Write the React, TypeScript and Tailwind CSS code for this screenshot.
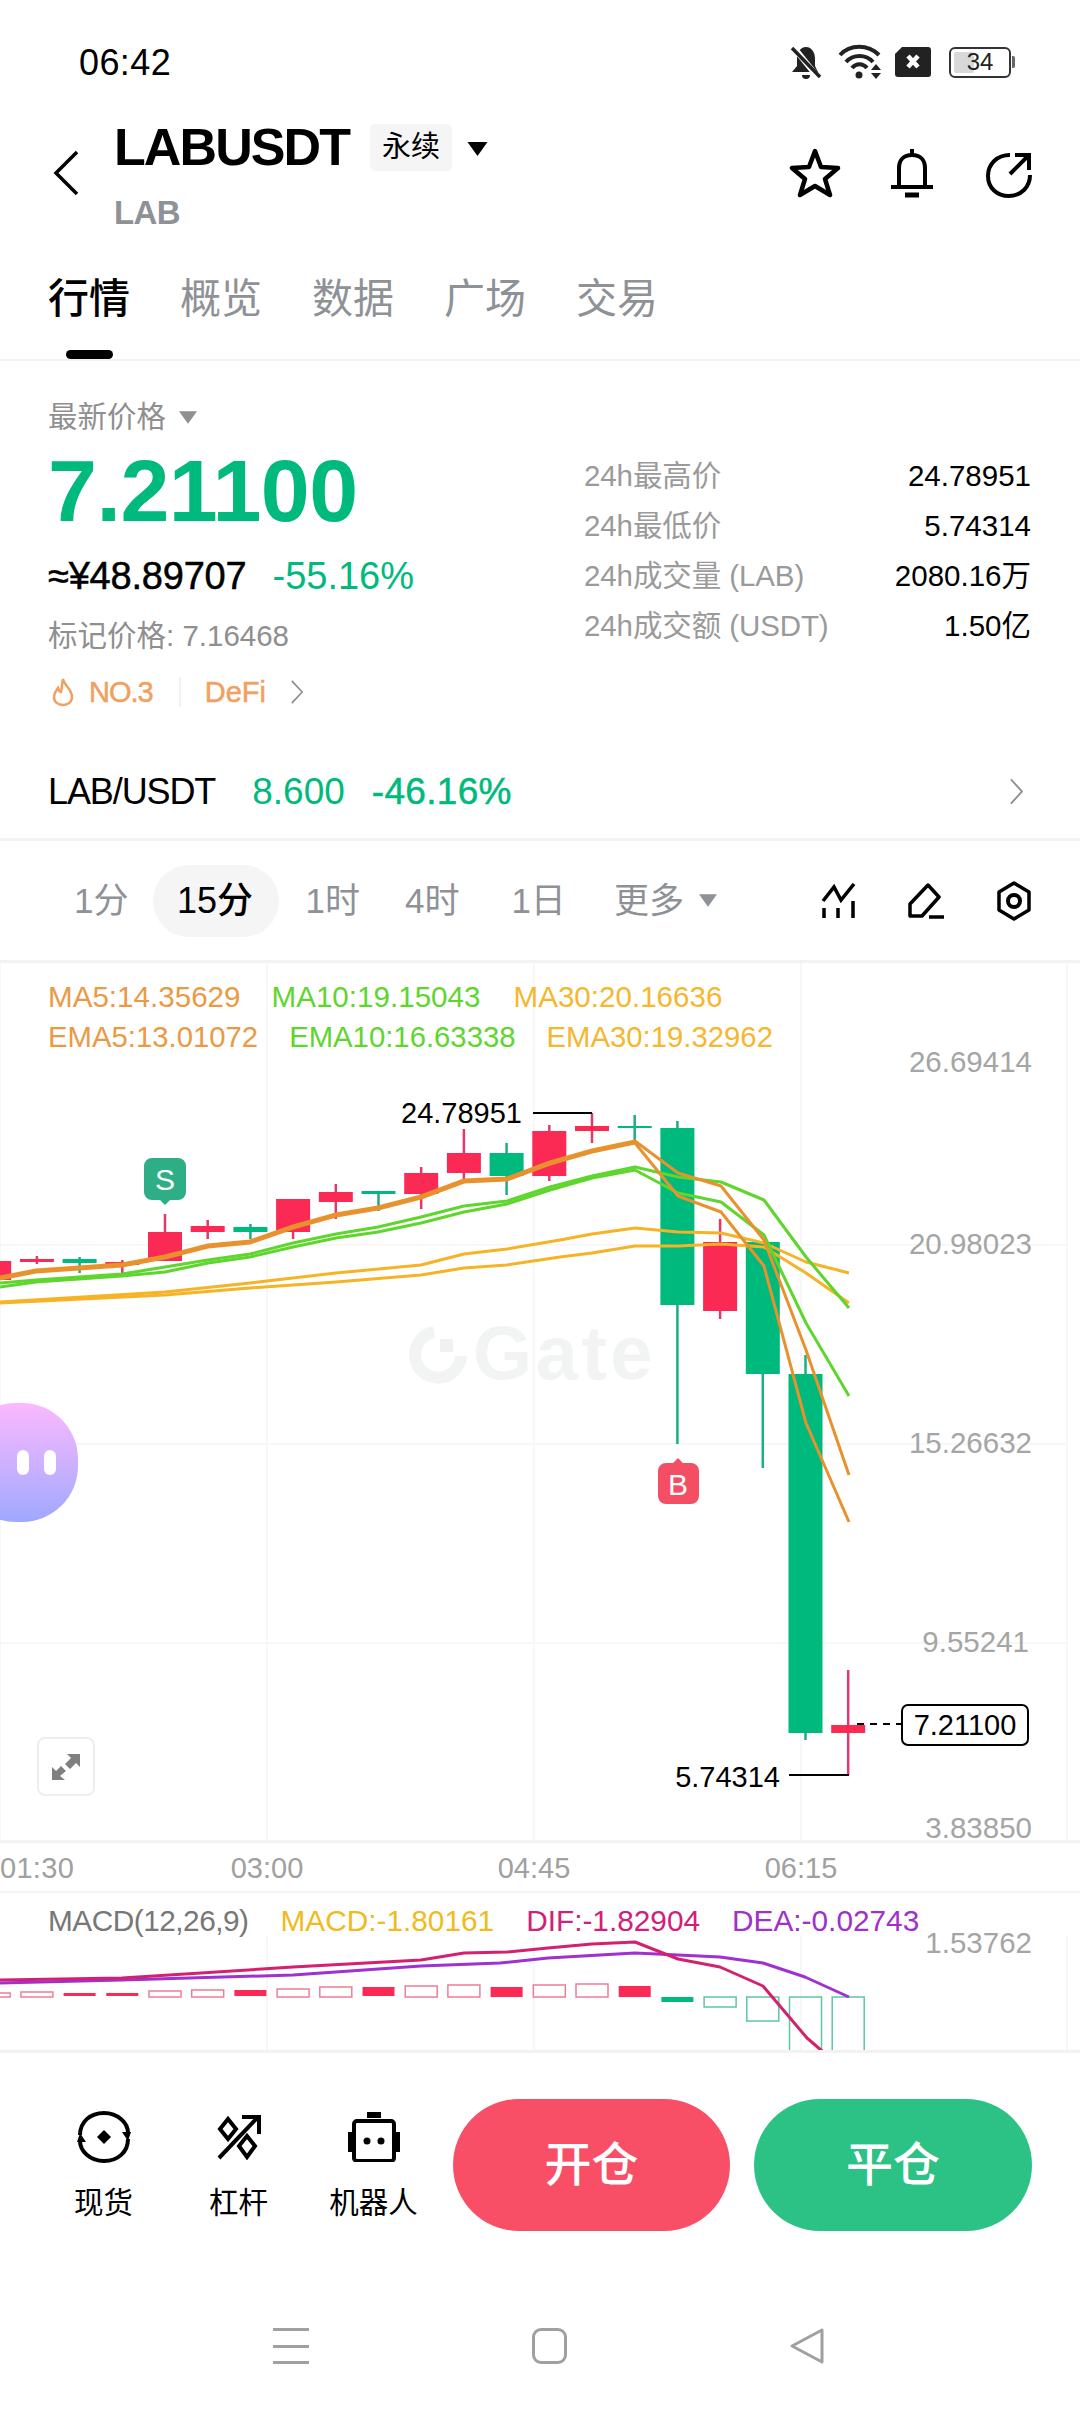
import React from "react";

const X = (i: number) => 165 + 42.7 * i;
const RED = "#fb2a55";
const GREEN = "#00b97c";

type C = [number, "r" | "g", number, number, number, number];
const candles: C[] = [
  [-4, "r", 1261, 1280, 1258, 1285],
  [-3, "r", 1259, 1262, 1256, 1264],
  [-2, "g", 1259, 1263, 1257, 1273],
  [-1, "r", 1262, 1265, 1260, 1273],
  [0, "r", 1232, 1261, 1214, 1261],
  [1, "r", 1226, 1232, 1220, 1239],
  [2, "g", 1227, 1232, 1224, 1239],
  [3, "r", 1199, 1232, 1199, 1239],
  [4, "r", 1192, 1202, 1184, 1219],
  [5, "g", 1191, 1194, 1191, 1211],
  [6, "r", 1173, 1194, 1167, 1209],
  [7, "r", 1153, 1173, 1129, 1181],
  [8, "g", 1153, 1176, 1143, 1195],
  [9, "r", 1131, 1176, 1125, 1181],
  [10, "r", 1126, 1131, 1113, 1143],
  [11, "g", 1126, 1128, 1115, 1140],
  [12, "g", 1128, 1305, 1121, 1444],
  [13, "r", 1242, 1311, 1219, 1319],
  [14, "g", 1242, 1374, 1242, 1468],
  [15, "g", 1374, 1733, 1355, 1740],
  [16, "r", 1725, 1733, 1670, 1775],
];

const pts = (a: number[][]) => a.map((p) => p.join(",")).join(" ");
const orangeBase = [[0, 1278], [36, 1271], [79, 1268], [122, 1265], [165, 1257], [208, 1246], [250, 1242], [293, 1227], [336, 1215], [378, 1208], [421, 1197], [464, 1181], [507, 1179], [550, 1163], [592, 1151], [635, 1142]];
const ema5 = [...orangeBase.map(([x, y]) => [x, y - 1]), [678, 1173], [721, 1186], [764, 1240], [806, 1350], [849, 1475]];
const ma5 = [...orangeBase.map(([x, y]) => [x, y + 1]), [678, 1196], [721, 1212], [764, 1266], [806, 1423], [849, 1522]];
const ma10 = [[0, 1283], [36, 1280], [79, 1277], [122, 1274], [165, 1267], [208, 1260], [250, 1254], [293, 1243], [336, 1234], [378, 1227], [421, 1217], [464, 1206], [507, 1201], [550, 1187], [592, 1176], [635, 1167], [678, 1177], [721, 1182], [764, 1200], [806, 1257], [849, 1308]];
const ema10 = [[0, 1287], [36, 1282], [79, 1279], [122, 1276], [165, 1272], [208, 1263], [250, 1257], [293, 1247], [336, 1238], [378, 1232], [421, 1223], [464, 1212], [507, 1204], [550, 1190], [592, 1178], [635, 1170], [678, 1193], [721, 1202], [764, 1235], [806, 1323], [849, 1396]];
const ma30 = [[0, 1302], [165, 1292], [250, 1283], [336, 1273], [421, 1265], [464, 1254], [507, 1249], [560, 1240], [592, 1234], [635, 1228], [678, 1232], [721, 1233], [764, 1243], [806, 1262], [849, 1273]];
const ema30 = [[0, 1303], [165, 1295], [250, 1288], [336, 1282], [421, 1275], [464, 1268], [507, 1265], [560, 1257], [592, 1253], [635, 1246], [678, 1246], [721, 1244], [764, 1247], [806, 1273], [849, 1303]];

const dif = [[0, 1980], [122, 1978], [293, 1967], [421, 1960], [464, 1953], [507, 1952], [548, 1948], [592, 1944], [635, 1942], [678, 1959], [720, 1967], [763, 1986], [807, 2038], [822, 2051]];
const dea = [[0, 1983], [122, 1980], [293, 1975], [421, 1966], [500, 1963], [548, 1958], [635, 1953], [678, 1955], [720, 1957], [763, 1963], [805, 1977], [849, 1997]];

type B = [number, number, number, "r" | "g", boolean];
const bars: B[] = [
  [-4, 1993, 1997, "r", false],
  [-3, 1992, 1997, "r", false],
  [-2, 1993, 1996, "r", true],
  [-1, 1993, 1996, "r", true],
  [0, 1991, 1997, "r", false],
  [1, 1990, 1997, "r", false],
  [2, 1990, 1996, "r", true],
  [3, 1989, 1997, "r", false],
  [4, 1987, 1997, "r", false],
  [5, 1987, 1996, "r", true],
  [6, 1986, 1997, "r", false],
  [7, 1985, 1997, "r", false],
  [8, 1987, 1997, "r", true],
  [9, 1985, 1997, "r", false],
  [10, 1984, 1997, "r", false],
  [11, 1986, 1997, "r", true],
  [12, 1997, 2002, "g", true],
  [13, 1997, 2007, "g", false],
  [14, 1997, 2021, "g", false],
  [15, 1997, 2052, "g", false],
  [16, 1997, 2052, "g", false],
];

function Tri({ cls }: { cls: string }) {
  return (
    <svg viewBox="0 0 20 14" className={cls}>
      <polygon points="0,0 20,0 10,14" fill="currentColor" />
    </svg>
  );
}

function Chevron({ cls }: { cls: string }) {
  return (
    <svg viewBox="0 0 14 28" className={cls} fill="none" stroke="currentColor" strokeWidth="2">
      <path d="M1 1 L13 14 L1 27" />
    </svg>
  );
}

function StatusBar() {
  return (
    <div className="h-[124px] flex items-center pl-[79px] pr-[65px] justify-between">
      <span className="text-[36px] text-black leading-none tracking-[0.4px] pt-[2px]">06:42</span>
      <div className="flex items-center">
        <svg width="32" height="36" viewBox="0 0 32 36" className="text-[#222]">
          <path d="M16 3 C10 3 7 9 7 15 L7 22 L2 28 L28 28 L25 22 L25 15 C25 9 22 3 16 3 Z" fill="currentColor" />
          <path d="M12 31 a4 4 0 0 0 8 0 Z" fill="currentColor" />
          <path d="M1 0 L30 36" stroke="#fff" strokeWidth="6" />
          <path d="M2 4 L30 33" stroke="currentColor" strokeWidth="3.5" />
        </svg>
        <svg width="46" height="36" viewBox="0 0 46 36" className="ml-[16px] text-[#222]" fill="none" stroke="currentColor">
          <path d="M2 11 C12 0 30 0 41 11" strokeWidth="4" />
          <path d="M8 18 C15 10 28 10 35 18" strokeWidth="4" />
          <path d="M14 24 C18 19 25 19 29 24" strokeWidth="4" />
          <circle cx="21" cy="31" r="3.5" fill="currentColor" stroke="none" />
          <polygon points="38,20 33,26 43,26" fill="currentColor" stroke="none" />
          <polygon points="38,35 33,29 43,29" fill="currentColor" stroke="none" />
        </svg>
        <svg width="36" height="30" viewBox="0 0 36 30" className="ml-[11px]">
          <path d="M7 0 H33 a3 3 0 0 1 3 3 V27 a3 3 0 0 1 -3 3 H3 a3 3 0 0 1 -3 -3 V7 Z" fill="#222" />
          <path d="M13 9 L23 20 M23 9 L13 20" stroke="#fff" strokeWidth="4.5" />
        </svg>
        <div className="ml-[18px] flex items-center">
          <div className="relative w-[62px] h-[31px] rounded-[6px] border-2 border-[#333] overflow-hidden flex items-center justify-center">
            <div className="absolute left-[3px] top-[3px] bottom-[3px] w-[20px] bg-[#d8d8d8] rounded-[2px]" />
            <span className="relative text-[24px] leading-none text-[#222]">34</span>
          </div>
          <div className="w-[3px] h-[12px] bg-[#666] ml-[1px] rounded-r-[2px]" />
        </div>
      </div>
    </div>
  );
}

function Header() {
  return (
    <div className="h-[112px] flex pl-[53px] pr-[48px]">
      <svg width="26" height="46" viewBox="0 0 26 46" className="mt-[26px]" fill="none" stroke="#000" strokeWidth="3.5">
        <path d="M24 2 L3 23 L24 44" />
      </svg>
      <div className="ml-[35px]">
        <div className="flex items-start h-[52px]">
          <span className="text-[52px] font-bold leading-[46px] text-black tracking-[-1.9px]">LABUSDT</span>
          <span className="ml-[21px] w-[82px] h-[47px] bg-[#f5f5f5] rounded-[5px] flex items-center justify-center text-[29px] text-black leading-none">永续</span>
          <Tri cls="ml-[15px] mt-[18px] w-[21px] h-[14px] text-black" />
        </div>
        <div className="text-[33px] text-[#8e9196] font-bold leading-[40px] mt-[17px] tracking-[-0.6px]">LAB</div>
      </div>
      <div className="ml-auto flex items-start mt-[24px]">
        <svg width="52" height="50" viewBox="0 0 52 50" fill="none" stroke="#000" strokeWidth="4.5" strokeLinejoin="round">
          <polygon points="26,3 32,19 49,20 36,31 41,47 26,38 11,47 16,31 3,20 20,19" />
        </svg>
        <svg width="46" height="50" viewBox="0 0 46 50" className="ml-[48px]" fill="none" stroke="#000" strokeWidth="4">
          <path d="M10 38 V20 C10 12 15 7 23 7 C31 7 36 12 36 20 V38" />
          <path d="M2 39 H44" />
          <path d="M23 1 V7" />
          <path d="M16 47 H30" strokeWidth="5" />
        </svg>
        <svg width="46" height="46" viewBox="0 0 46 46" className="ml-[51px] mt-[4px]" fill="none" stroke="#000" strokeWidth="4">
          <path d="M24 3 C11 3 2 12 2 24 C2 36 11 44 23 44 C35 44 44 35 44 23" />
          <path d="M24 22 L42 4" strokeWidth="4" />
          <path d="M29 3 H43 V18" strokeWidth="4" />
        </svg>
      </div>
    </div>
  );
}

function Tabs() {
  const items = ["概览", "数据", "广场", "交易"];
  return (
    <div className="relative h-[125px] border-b-2 border-[#f2f2f2] pl-[48px] flex gap-[50px] pt-[40px]">
      <div className="text-[41px] leading-[46px] text-black font-medium">行情</div>
      {items.map((t) => (
        <div key={t} className="text-[41px] leading-[46px] text-[#8e9196]">
          {t}
        </div>
      ))}
      <div className="absolute left-[66px] bottom-[0px] w-[47px] h-[9px] rounded-full bg-black" />
    </div>
  );
}

function Stat({ k, v }: { k: string; v: string }) {
  return (
    <div className="h-[50px] flex items-center justify-between">
      <span className="text-[29.5px] text-[#9a9a9a] tracking-[-0.1px]">{k}</span>
      <span className="text-[29.5px] text-black">{v}</span>
    </div>
  );
}

function PriceInfo() {
  return (
    <div className="h-[380px] flex pl-[48px] pr-[49px]">
      <div className="pt-[36px]">
        <div className="h-[40px] flex items-center text-[29.5px] text-[#8f8f8f] leading-none">
          最新价格
          <Tri cls="ml-[13px] w-[18px] h-[13px] text-[#8f8f8f]" />
        </div>
        <div className="text-[88px] font-bold leading-[100px] text-[#00b97c] h-[100px] mt-[4px] tracking-[-0.5px]">7.21100</div>
        <div className="h-[40px] mt-[15px] flex items-center leading-none">
          <span className="text-[38px] text-black [-webkit-text-stroke:0.5px_#000] tracking-[-0.2px]">≈¥48.89707</span>
          <span className="ml-[26px] text-[38px] text-[#00b97c]">-55.16%</span>
        </div>
        <div className="h-[40px] mt-[20px] flex items-center text-[29.5px] text-[#8f8f8f] leading-none">标记价格: 7.16468</div>
        <div className="h-[40px] mt-[16px] flex items-center text-[29px] text-[#f0a060] leading-none">
          <svg width="22" height="30" viewBox="0 0 22 30" fill="none" stroke="#f0a060" strokeWidth="2.5" className="ml-[4px]">
            <path d="M11 2 C12 8 20 12 20 20 C20 25 16 28 11 28 C6 28 2 25 2 20 C2 16 4 14 6 11 C7 14 8 15 9 15 C10 11 10 6 11 2 Z" />
          </svg>
          <span className="ml-[15px] [-webkit-text-stroke:0.5px_#f0a060] tracking-[-1px]">NO.3</span>
          <span className="ml-[26px] w-[2px] h-[30px] bg-[#f2f2f2]" />
          <span className="ml-[24px] [-webkit-text-stroke:0.5px_#f0a060]">DeFi</span>
          <Chevron cls="ml-[25px] w-[12px] h-[24px] text-[#8f8f8f]" />
        </div>
      </div>
      <div className="ml-auto w-[447px] pt-[90px]">
        <Stat k="24h最高价" v="24.78951" />
        <Stat k="24h最低价" v="5.74314" />
        <Stat k="24h成交量 (LAB)" v="2080.16万" />
        <Stat k="24h成交额 (USDT)" v="1.50亿" />
      </div>
    </div>
  );
}

function PairRow() {
  return (
    <div className="h-[100px] border-b-[3px] border-[#f2f2f2] flex items-center pl-[48px] pr-[57px] pt-[4px]">
      <span className="text-[36px] text-black tracking-[-1.1px]">LAB/USDT</span>
      <span className="ml-[37px] text-[37px] text-[#00b97c]">8.600</span>
      <span className="ml-[27px] text-[37px] text-[#00b97c] [-webkit-text-stroke:0.5px_#00b97c] tracking-[0.3px]">-46.16%</span>
      <Chevron cls="ml-auto w-[13px] h-[27px] text-[#8f8f8f]" />
    </div>
  );
}

function Intervals() {
  return (
    <div className="h-[122px] border-b-[3px] border-[#f2f2f2] flex items-center pl-[74px] pr-[49px] text-[35px] text-[#8e9196] leading-none">
      <span>1分</span>
      <span className="ml-[25px] w-[126px] h-[72px] rounded-[36px] bg-[#f5f5f5] flex items-center justify-center text-black text-[36px] font-medium pr-[3px]">15分</span>
      <span className="ml-[26px]">1时</span>
      <span className="ml-[45px]">4时</span>
      <span className="ml-[52px]">1日</span>
      <span className="ml-[48px]">更多</span>
      <Tri cls="ml-[15px] w-[18px] h-[13px] text-[#8e9196]" />
      <div className="ml-auto flex items-center">
        <svg width="36" height="36" viewBox="0 0 36 36" fill="none" stroke="#000" strokeWidth="3.5">
          <path d="M2 18 L13 4 L20 17 L33 1" />
          <path d="M3 25 V35 M17 25 V35 M32 18 V35" />
        </svg>
        <svg width="38" height="36" viewBox="0 0 38 36" className="ml-[50px]" fill="none" stroke="#000" strokeWidth="3.5" strokeLinejoin="round">
          <path d="M21 2 L32 14 L15 33 H3 V21 Z" />
          <path d="M22 34 H37" />
        </svg>
        <svg width="34" height="40" viewBox="0 0 34 40" className="ml-[52px]" fill="none" stroke="#000" strokeWidth="3.5" strokeLinejoin="round">
          <polygon points="17,2 32,11 32,29 17,38 2,29 2,11" />
          <circle cx="17" cy="20" r="6" strokeWidth="4" />
        </svg>
      </div>
    </div>
  );
}

function MainChart() {
  const gridCol = "#f6f7f7";
  return (
    <div className="relative h-[880px] border-b-[3px] border-[#f2f2f2]">
      <svg width="1080" height="877" viewBox="0 963 1080 877" className="absolute inset-0 overflow-visible">
        {[0, 267, 534, 801, 1067].map((x) => (
          <line key={x} x1={x} x2={x} y1={963} y2={1840} stroke={gridCol} strokeWidth="2" />
        ))}
        {[1245, 1444, 1643].map((y) => (
          <line key={y} x1={0} x2={1067} y1={y} y2={y} stroke={gridCol} strokeWidth="2" />
        ))}
        {/* watermark */}
        <path d="M434 1332 A 23 23 0 1 0 461 1356" fill="none" stroke="#f2f3f3" strokeWidth="12" />
        <rect x="440" y="1339" width="13" height="13" fill="#f0f1f1" />
        <text x="473" y="1379" fontSize="76" fontWeight="700" fill="#f2f3f3" letterSpacing="3.5">Gate</text>

        {candles.map(([i, c, t, b, wt, wb]) => {
          const col = c === "r" ? RED : GREEN;
          const x = X(i);
          return (
            <g key={i}>
              <line x1={x} x2={x} y1={wt} y2={wb} stroke={c === "r" ? "#e5386a" : "#1aae86"} strokeWidth="2.5" />
              <rect x={x - 17} y={t} width="34" height={b - t} fill={col} />
            </g>
          );
        })}

        <g fill="none" strokeWidth="3" strokeLinejoin="round">
          <polyline points={pts(ma30)} stroke="#f5b325" />
          <polyline points={pts(ema30)} stroke="#f5b325" />
          <polyline points={pts(ma10)} stroke="#5ed62e" />
          <polyline points={pts(ema10)} stroke="#5ed62e" />
          <polyline points={pts(ema5)} stroke="#e8922e" />
          <polyline points={pts(ma5)} stroke="#e8922e" />
        </g>

        {/* S marker */}
        <path d="M152 1158 H178 a8 8 0 0 1 8 8 V1192 a8 8 0 0 1 -8 8 H170 L165 1205 L160 1200 H152 a8 8 0 0 1 -8 -8 V1166 a8 8 0 0 1 8 -8 Z" fill="#2dae85" />
        <text x="165" y="1190" fontSize="30" fill="#fff" textAnchor="middle">S</text>
        {/* B marker */}
        <path d="M666 1463 H673 L678 1458 L683 1463 H691 a8 8 0 0 1 8 8 V1496 a8 8 0 0 1 -8 8 H666 a8 8 0 0 1 -8 -8 V1471 a8 8 0 0 1 8 -8 Z" fill="#f44e64" />
        <text x="678" y="1495" fontSize="30" fill="#fff" textAnchor="middle">B</text>

        {/* high */}
        <text x="522" y="1123" fontSize="29" fill="#000" textAnchor="end">24.78951</text>
        <path d="M533 1113 H592" stroke="#000" strokeWidth="2" />
        {/* low */}
        <text x="780" y="1787" fontSize="29" fill="#000" textAnchor="end">5.74314</text>
        <path d="M789 1775 H849" stroke="#000" strokeWidth="2" />
        {/* current */}
        <path d="M857 1724 H901" stroke="#000" strokeWidth="2" strokeDasharray="7 6" />
        <rect x="902" y="1705" width="126" height="40" rx="6" fill="#fff" stroke="#000" strokeWidth="2" />
        <text x="965" y="1735" fontSize="29" fill="#000" textAnchor="middle">7.21100</text>

        <g fontSize="29.5" fill="#a5a5a5" textAnchor="end">
          <text x="1032" y="1072">26.69414</text>
          <text x="1032" y="1254">20.98023</text>
          <text x="1032" y="1453">15.26632</text>
          <text x="1029" y="1652">9.55241</text>
          <text x="1032" y="1838">3.83850</text>
        </g>
      </svg>

      <div className="absolute left-[48px] top-[17px] leading-[34px] whitespace-pre">
        <div className="flex h-[40px] text-[29.6px]">
          <span className="text-[#ea9a45]">MA5:14.35629</span>
          <span className="ml-[31px] text-[#5ed62e]">MA10:19.15043</span>
          <span className="ml-[33px] text-[#f5b72e]">MA30:20.16636</span>
        </div>
        <div className="flex gap-[31px] text-[29.3px]">
          <span className="text-[#ea9a45]">EMA5:13.01072</span>
          <span className="text-[#5ed62e]">EMA10:16.63338</span>
          <span className="text-[#f5b72e]">EMA30:19.32962</span>
        </div>
      </div>

      <div className="absolute left-[-40px] top-[440px] w-[118px] h-[119px] rounded-[56px] bg-gradient-to-b from-[#fbb8ff] to-[#9fa8ff] flex items-center justify-end pr-[22px] gap-[15px]">
        <span className="w-[12px] h-[25px] rounded-full bg-white" />
        <span className="w-[12px] h-[25px] rounded-full bg-white" />
      </div>

      <div className="absolute left-[37px] top-[774px] w-[58px] h-[59px] rounded-[8px] border-2 border-[#eeeeee] bg-white flex items-center justify-center">
        <svg width="28" height="28" viewBox="0 0 28 28" fill="#808080">
          <polygon points="15,1 28,1 28,14 24,10 18,16 13,11 19,5" />
          <polygon points="13,27 0,27 0,14 4,18 9,13 14,18 8,23" />
        </svg>
      </div>
    </div>
  );
}

function TimeAxis() {
  return (
    <div className="relative h-[50px] border-b-2 border-[#f4f4f4] text-[29px] text-[#a0a0a0] leading-none flex items-center pt-[2px]">
      <span className="w-[73px] text-center tracking-[0.3px]">01:30</span>
      <span className="ml-[157px] w-[74px] text-center">03:00</span>
      <span className="ml-[193px] w-[74px] text-center">04:45</span>
      <span className="ml-[193px] w-[74px] text-center">06:15</span>
    </div>
  );
}

function Macd() {
  return (
    <div className="relative h-[160px] border-b-[3px] border-[#f2f2f2]">
      <svg width="1080" height="157" viewBox="0 1893 1080 157" className="absolute inset-0">
        {[267, 534, 801, 1067].map((x) => (
          <line key={x} x1={x} x2={x} y1={1935} y2={2052} stroke="#f6f7f7" strokeWidth="2" />
        ))}
        {bars.map(([i, t, b, c, fill]) => {
          const col = c === "r" ? RED : GREEN;
          const x = X(i);
          return fill ? (
            <rect key={i} x={x - 16} y={t} width="32" height={b - t} fill={col} />
          ) : (
            <rect key={i} x={x - 16} y={t} width="32" height={b - t} fill="none" stroke={c === "r" ? "#ee7e95" : "#5cc6a3"} strokeWidth="1.5" />
          );
        })}
        <g fill="none" strokeWidth="3" strokeLinejoin="round">
          <polyline points={pts(dea)} stroke="#a030d0" />
          <polyline points={pts(dif)} stroke="#d4206f" />
        </g>
        <text x="1032" y="1953" fontSize="29.5" fill="#a5a5a5" textAnchor="end">1.53762</text>
      </svg>
      <div className="absolute left-[48px] top-[11px] flex text-[29.8px] leading-[34px] whitespace-pre">
        <span className="text-[#777777] tracking-[-0.5px]">MACD(12,26,9)</span>
        <span className="ml-[32px] text-[#f0bb20]">MACD:-1.80161</span>
        <span className="ml-[32px] text-[#d0207a]">DIF:-1.82904</span>
        <span className="ml-[32px] text-[#a030c8]">DEA:-0.02743</span>
      </div>
    </div>
  );
}

function BottomItem({ label, children }: { label: string; children: React.ReactNode }) {
  return (
    <div className="w-[135px] flex flex-col items-center">
      <div className="h-[56px] flex items-center justify-center">{children}</div>
      <div className="mt-[20px] text-[29.5px] text-black leading-[36px]">{label}</div>
    </div>
  );
}

function BottomBar() {
  return (
    <div className="flex pl-[36px] pt-[46px]">
      <div className="flex pt-[10px]">
        <BottomItem label="现货">
          <svg width="54" height="52" viewBox="0 0 54 52" fill="none" stroke="#000" strokeWidth="4">
            <path d="M3 24 C3 11 13 2 27 2 C41 2 51 12 51 22" />
            <path d="M51 28 C51 41 41 50 27 50 C13 50 3 40 3 30" />
            <polygon points="45,21 54,21 51,30" fill="#000" stroke="none" />
            <polygon points="0,31 9,31 3,22" fill="#000" stroke="none" />
            <polygon points="27,19 34,26 27,33 20,26" fill="#000" stroke="none" />
          </svg>
        </BottomItem>
        <BottomItem label="杠杆">
          <svg width="46" height="46" viewBox="0 0 46 46" fill="none" stroke="#000" strokeWidth="4">
            <path d="M3 44 L42 3" />
            <path d="M26 3 H43 V20" />
            <polygon points="12,5 20,15 12,25 4,15" />
            <polygon points="31,22 39,32 31,43 23,32" />
          </svg>
        </BottomItem>
        <BottomItem label="机器人">
          <svg width="52" height="50" viewBox="0 0 52 50" fill="none">
            <rect x="19" y="0" width="14" height="6" fill="#000" />
            <rect x="6" y="9" width="40" height="40" rx="3" stroke="#000" strokeWidth="4" />
            <rect x="0" y="20" width="4" height="20" fill="#000" />
            <rect x="48" y="20" width="4" height="20" fill="#000" />
            <circle cx="19" cy="29" r="3.5" fill="#000" />
            <circle cx="33" cy="29" r="3.5" fill="#000" />
          </svg>
        </BottomItem>
      </div>
      <button className="ml-[12px] w-[277px] h-[132px] rounded-[66px] bg-[#f94f66] text-white text-[47px] font-medium">开仓</button>
      <button className="ml-[24px] w-[278px] h-[132px] rounded-[66px] bg-[#2dc285] text-white text-[47px] font-medium">平仓</button>
    </div>
  );
}

function NavBar() {
  return (
    <div className="mt-[96px] h-[38px] flex items-center pl-[273px]">
      <div className="w-[36px] h-[36px] flex flex-col justify-between">
        <div className="h-[3px] bg-[#a0a0a0]" />
        <div className="h-[3px] bg-[#a0a0a0]" />
        <div className="h-[3px] bg-[#a0a0a0]" />
      </div>
      <div className="ml-[223px] w-[35px] h-[36px] rounded-[9px] border-[3px] border-[#a0a0a0]" />
      <svg width="36" height="38" viewBox="0 0 36 38" className="ml-[222px]" fill="none" stroke="#a0a0a0" strokeWidth="3" strokeLinejoin="round">
        <path d="M33 3 V35 L3 19 Z" />
      </svg>
    </div>
  );
}

export default function App() {
  return (
    <div className="relative w-[1080px] h-[2412px] bg-white overflow-hidden font-[family-name:'Liberation_Sans','Noto_Sans_CJK_SC',sans-serif]">
      <StatusBar />
      <Header />
      <Tabs />
      <PriceInfo />
      <PairRow />
      <Intervals />
      <MainChart />
      <TimeAxis />
      <Macd />
      <BottomBar />
      <NavBar />
    </div>
  );
}
